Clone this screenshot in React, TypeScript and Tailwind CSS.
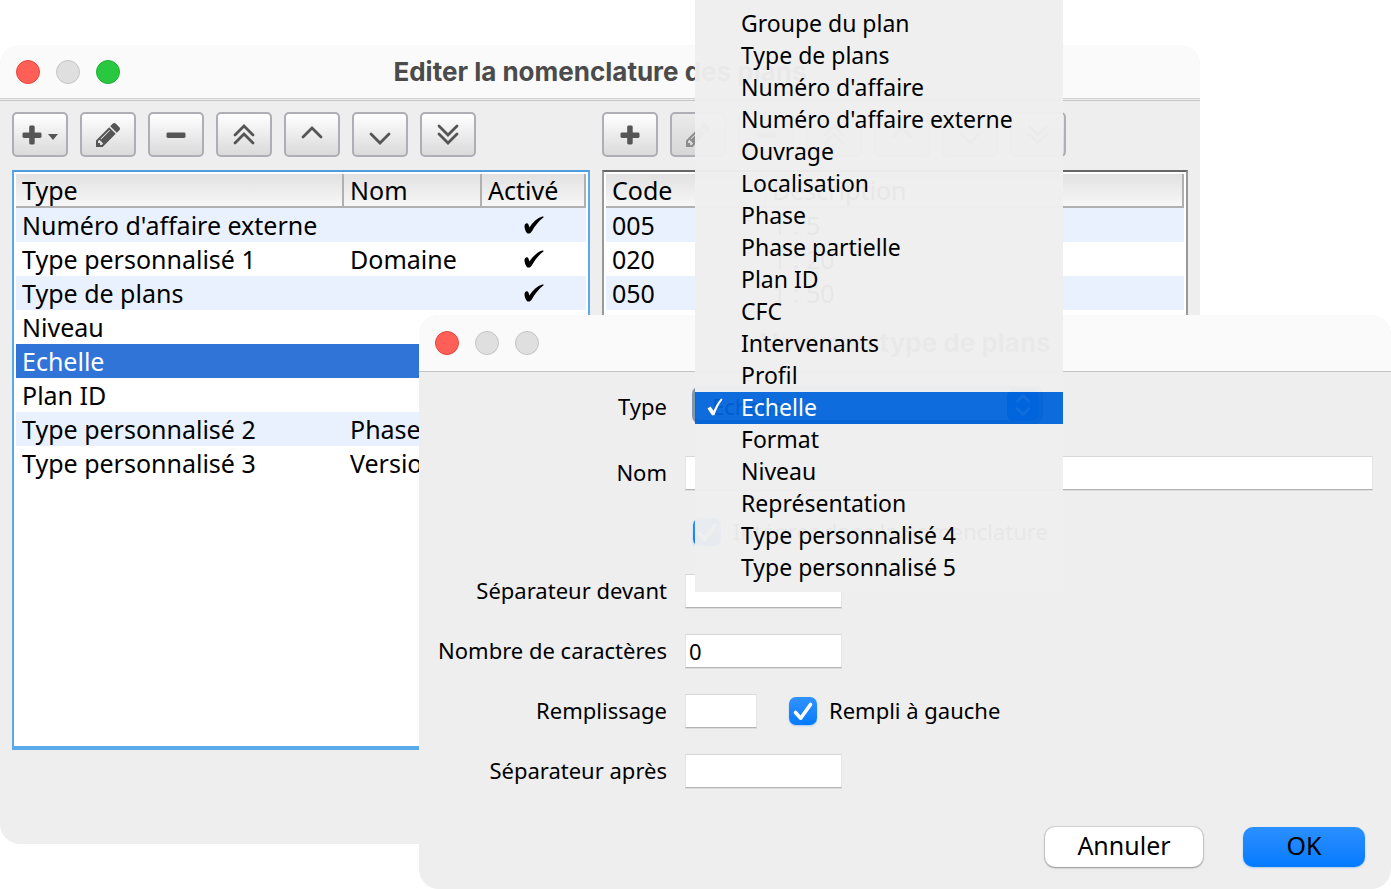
import type { ReactNode } from "react";

type IconName = "plus" | "pencil" | "minus" | "top" | "up" | "down" | "bottom";

const LINES: Record<string, string> = {
  top: "M5 14l9-9 9 9M5 22l9-9 9 9",
  up: "M5 16l9-9 9 9",
  down: "M5 13l9 9 9-9",
  bottom: "M5 5l9 9 9-9M5 13l9 9 9-9",
};

function Icon({ name }: { name: IconName }) {
  if (name === "pencil") {
    return (
      <svg viewBox="128 149 1515 1515" className="h-6 w-6 fill-current" aria-hidden="true">
        <path d="M491 1536l91-91-235-235-91 91v107h128v128h107zm523-928q0-22-22-22-10 0-17 7l-542 542q-7 7-7 17 0 22 22 22 10 0 17-7l542-542q7-7 7-17zm-54-192l416 416-832 832h-416v-416zm683 96q0 53-37 90l-166 166-416-416 166-165q36-38 90-38 53 0 91 38l235 234q37 39 37 91z" />
      </svg>
    );
  }
  if (name === "plus" || name === "minus") {
    return (
      <svg viewBox="0 0 20 20" className="h-5 w-5 shrink-0 fill-current" aria-hidden="true">
        <rect x="0.5" y="7.5" width="19" height="5.5" rx="1.4" />
        {name === "plus" && <rect x="7.2" y="0.5" width="5.5" height="19" rx="1.4" />}
      </svg>
    );
  }
  return (
    <svg viewBox="0 0 28 28" className="h-7 w-7 fill-none stroke-current stroke-[2.8]" strokeLinecap="round" aria-hidden="true">
      <path d={LINES[name]} />
    </svg>
  );
}

function ToolButton({ icon, label, menu, disabled }: { icon: IconName; label: string; menu?: boolean; disabled?: boolean }) {
  return (
    <button
      type="button"
      aria-label={label}
      disabled={disabled}
      className="flex h-[45px] w-14 items-center justify-center gap-1.5 rounded-[5px] border-2 border-[#aeaeb4] bg-linear-to-b from-white to-[#dadada] text-[#555] disabled:from-[#ebebeb] disabled:to-[#d6d6d6] disabled:text-[#8c8c8c]"
    >
      <Icon name={icon} />
      {menu && (
        <svg viewBox="0 0 10 6" className="mt-1 h-1.5 w-2.5 shrink-0 fill-current" aria-hidden="true">
          <path d="M0 0h10L5 6z" />
        </svg>
      )}
    </button>
  );
}

function Toolbar({ children }: { children: ReactNode }) {
  return <div className="flex gap-3">{children}</div>;
}

function Lights({ third }: { third: string }) {
  return (
    <div className="absolute left-4 flex gap-4">
      <button type="button" aria-label="Fermer" className="h-6 w-6 rounded-full border border-[#e2463f] bg-[#ff5f57]" />
      <button type="button" aria-label="Réduire" className="h-6 w-6 rounded-full border border-[#c4c4c4] bg-[#dfdfdf]" />
      <button type="button" aria-label="Agrandir" className={"h-6 w-6 rounded-full border " + third} />
    </div>
  );
}

function HeavyCheck() {
  return (
    <svg viewBox="0 0 20 18" className="mx-auto h-[18px] w-5 fill-black" role="img" aria-label="Activé">
      <path d="M0.5 10.2c0-1.6 1.2-2.9 2.4-2.9 1.4 0 1.9 1.6 2.5 4.2C8.6 6.500 13.500 1.800 18.300 0.500c0.900-0.200 1.700 0.200 1.300 0.800C14.600 5.200 11 9.800 7.900 15.300 7 17 5.900 17.600 4.600 17.600 2.200 17.600 0.500 13 0.500 10.200z" />
    </svg>
  );
}

const TH = "h-[34px] border-b-2 border-r-2 border-[#b0b0b0] bg-linear-to-b from-[#e1e1e1] to-[#f7f7f7] px-1.5 text-left font-normal";

const TYPES = [
  { type: "Numéro d'affaire externe", nom: "", on: true },
  { type: "Type personnalisé 1", nom: "Domaine", on: true },
  { type: "Type de plans", nom: "", on: true },
  { type: "Niveau", nom: "", on: false },
  { type: "Echelle", nom: "", on: false },
  { type: "Plan ID", nom: "", on: false },
  { type: "Type personnalisé 2", nom: "Phase", on: false },
  { type: "Type personnalisé 3", nom: "Version", on: false },
];

const CODES = [
  ["005", "1 : 5"],
  ["020", "1 : 20"],
  ["050", "1 : 50"],
];

function MainWindow() {
  return (
    <section className="absolute left-0 right-[191px] top-[45px] overflow-hidden rounded-[20px] bg-[#eee] pb-[94px]">
      <header className="relative flex h-[54px] items-center justify-center border-b border-[#cfcfcf] bg-[#fafafa]">
        <Lights third="border-[#1fae33] bg-[#28c840]" />
        <h1 className="font-[Inter,sans-serif] text-[26px] leading-8 font-bold text-[#4b4b4b]">Editer la nomenclature des plans</h1>
      </header>
      <div className="mt-px flex gap-3 border-t border-[#c4c4c4] px-3 pt-[11px] text-[25px]">
        <div className="flex w-[578px] shrink-0 flex-col gap-[13px]">
          <Toolbar>
            <ToolButton icon="plus" label="Ajouter un type" menu />
            <ToolButton icon="pencil" label="Modifier" />
            <ToolButton icon="minus" label="Supprimer" />
            <ToolButton icon="top" label="Tout en haut" />
            <ToolButton icon="up" label="Monter" />
            <ToolButton icon="down" label="Descendre" />
            <ToolButton icon="bottom" label="Tout en bas" />
          </Toolbar>
          <div className="min-h-[580px] border-2 border-b-4 border-[#5aa9e8] border-t-[#4f9bdb] bg-white p-0.5">
            <table className="w-full table-fixed border-separate border-spacing-0 leading-8 whitespace-nowrap">
              <thead>
                <tr>
                  <th className={TH}>Type</th>
                  <th className={TH + " w-[138px]"}>Nom</th>
                  <th className={TH + " w-[104px]"}>Activé</th>
                </tr>
              </thead>
              <tbody>
                {TYPES.map((row, i) => (
                  <tr key={row.type} className={row.type === "Echelle" ? "bg-[#3074d8] text-white" : i % 2 === 0 ? "bg-[#eaf1fe]" : "bg-white"}>
                    <td className="h-[34px] px-1.5">{row.type}</td>
                    <td className="px-1.5">{row.nom}</td>
                    <td>{row.on && <HeavyCheck />}</td>
                  </tr>
                ))}
              </tbody>
            </table>
          </div>
        </div>
        <div className="flex min-w-0 grow flex-col gap-[13px]">
          <Toolbar>
            <ToolButton icon="plus" label="Ajouter un code" />
            <ToolButton icon="pencil" label="Modifier le code" disabled />
            <ToolButton icon="minus" label="Supprimer le code" disabled />
            <ToolButton icon="top" label="Code tout en haut" disabled />
            <ToolButton icon="up" label="Monter le code" disabled />
            <ToolButton icon="down" label="Descendre le code" disabled />
            <ToolButton icon="bottom" label="Code tout en bas" disabled />
          </Toolbar>
          <div className="min-h-[580px] border-2 border-[#999] border-t-[#666] bg-white p-0.5">
            <table className="w-full table-fixed border-separate border-spacing-0 leading-8 whitespace-nowrap">
              <thead>
                <tr>
                  <th className={TH + " w-[160px]"}>Code</th>
                  <th className={TH}>Description</th>
                </tr>
              </thead>
              <tbody>
                {CODES.map(([code, text], i) => (
                  <tr key={code} className={i % 2 === 0 ? "bg-[#eaf1fe]" : "bg-white"}>
                    <td className="h-[34px] px-1.5">{code}</td>
                    <td className="px-1.5">{text}</td>
                  </tr>
                ))}
              </tbody>
            </table>
          </div>
        </div>
      </div>
    </section>
  );
}

const OPTIONS = [
  "Groupe du plan",
  "Type de plans",
  "Numéro d'affaire",
  "Numéro d'affaire externe",
  "Ouvrage",
  "Localisation",
  "Phase",
  "Phase partielle",
  "Plan ID",
  "CFC",
  "Intervenants",
  "Profil",
  "Echelle",
  "Format",
  "Niveau",
  "Représentation",
  "Type personnalisé 4",
  "Type personnalisé 5",
];

function TypeMenu() {
  return (
    <ul role="listbox" aria-label="Type" className="absolute left-[695px] top-0 w-[368px] border-y-8 border-[#eee]/97 text-[23px] leading-[30px]">
      {OPTIONS.map((name) => {
        const selected = name === "Echelle";
        return (
          <li key={name} role="option" aria-selected={selected} className={selected ? "flex bg-[#0063da]/94 pb-0.5 text-white" : "flex bg-[#eee]/97 pb-0.5"}>
            <span className="flex w-[46px] items-center pl-3">
              {selected && (
                <svg viewBox="0 0 16 18" className="h-[18px] w-4 fill-current" aria-hidden="true">
                  <path d="M0.500 10.500L3.500 8.600l3 4.200C8.500 8.500 11 4 14 0.600L15.600 1.500C12 6 9.500 11 7.500 17.300H5z" />
                </svg>
              )}
            </span>
            {name}
          </li>
        );
      })}
    </ul>
  );
}

function Tick({ id, label }: { id: string; label: string }) {
  return (
    <div className="flex items-center gap-3">
      <span className="grid h-7 w-7">
        <input id={id} type="checkbox" defaultChecked className="col-start-1 row-start-1 h-7 w-7 appearance-none rounded-[7px] bg-linear-to-b from-[#2f92ff] to-[#007aff] shadow-[0_1px_2px_rgba(0,122,255,0.3)]" />
        <svg viewBox="0 0 28 28" className="pointer-events-none col-start-1 row-start-1 h-7 w-7 fill-none stroke-white stroke-[3.6]" strokeLinecap="round" strokeLinejoin="round" aria-hidden="true">
          <path d="M6.500 15.500l5.200 5.700L21.500 7.500" />
        </svg>
      </span>
      <label htmlFor={id} className="pb-0.5">
        {label}
      </label>
    </div>
  );
}

const FIELD = "h-[34px] border border-x-[#e4e4e4] border-t-[#d8d8d8] border-b-[#b4b4b4] bg-white px-[3px] shadow-[0_1px_0_#dcdcdc] outline-none";
const ROW = "grid h-[60px] grid-cols-[248px_1fr] items-center gap-[18px]";

function TextRow({ id, label, value, field, children }: { id: string; label: string; value?: string; field: string; children?: ReactNode }) {
  return (
    <div className={ROW}>
      <label htmlFor={id} className="pb-0.5 text-right whitespace-nowrap">
        {label}
      </label>
      <div className="flex items-center gap-8">
        <input id={id} type="text" defaultValue={value} className={FIELD + " " + field} />
        {children}
      </div>
    </div>
  );
}

function Dialog() {
  return (
    <section role="dialog" aria-labelledby="dialog-title" className="absolute left-[419px] right-0 top-[315px] overflow-hidden rounded-[20px] bg-[#eee]">
      <header className="relative flex h-[57px] items-center justify-center border-b border-[#c4c4c4] bg-[#fafafa]">
        <Lights third="border-[#c4c4c4] bg-[#dfdfdf]" />
        <h2 id="dialog-title" className="font-[Inter,sans-serif] text-[26px] leading-8 font-bold text-[#4b4b4b]">
          Nouveau type de plans
        </h2>
      </header>
      <form className="pt-[5px] text-[22px]">
        <div className={ROW + " mb-1.5"}>
          <label htmlFor="type" className="pb-0.5 text-right">
            Type
          </label>
          <div className="grid w-[358px] items-center pb-1 pl-[7px]">
            <select id="type" className="col-start-1 row-start-1 h-[38px] appearance-none rounded-lg border-4 border-[#8397ab] bg-white px-4 outline-none">
              <option>Echelle</option>
            </select>
            <svg viewBox="0 0 34 34" className="pointer-events-none col-start-1 row-start-1 mr-1 h-8 w-8 justify-self-end" aria-hidden="true">
              <rect width="34" height="34" rx="7" fill="#007aff" />
              <path d="M11 13l6-6 6 6M11 21l6 6 6-6" fill="none" stroke="#fff" strokeWidth="3" strokeLinecap="round" strokeLinejoin="round" />
            </svg>
          </div>
        </div>
        <TextRow id="nom" label="Nom" field="mr-[18px] grow" />
        <div className="flex h-[58px] items-center pl-[274px]">
          <Tick id="integrer" label="Intégrer dans la nomenclature" />
        </div>
        <TextRow id="sep-devant" label="Séparateur devant" field="w-[157px]" />
        <TextRow id="nombre" label="Nombre de caractères" value="0" field="w-[157px]" />
        <TextRow id="remplissage" label="Remplissage" field="w-[72px]">
          <Tick id="gauche" label="Rempli à gauche" />
        </TextRow>
        <TextRow id="sep-apres" label="Séparateur après" field="w-[157px]" />
        <div className="flex justify-end gap-10 pb-[22px] pr-[26px] pt-[26px] text-[25px] leading-none">
          <button type="button" className="h-10 w-[158px] rounded-[10px] bg-white pb-1 shadow-[0_0_1px_1px_rgba(0,0,0,0.12),0_1px_2px_rgba(0,0,0,0.3)]">
            Annuler
          </button>
          <button type="button" className="h-10 w-[122px] rounded-[10px] bg-linear-to-b from-[#2b90ff] to-[#007aff] pb-1 shadow-[0_1px_2px_rgba(0,122,255,0.3)]">
            OK
          </button>
        </div>
      </form>
    </section>
  );
}

export default function App() {
  return (
    <main className="relative min-h-screen overflow-hidden bg-white font-['Noto_Sans',sans-serif] text-black">
      <MainWindow />
      <Dialog />
      <TypeMenu />
    </main>
  );
}
